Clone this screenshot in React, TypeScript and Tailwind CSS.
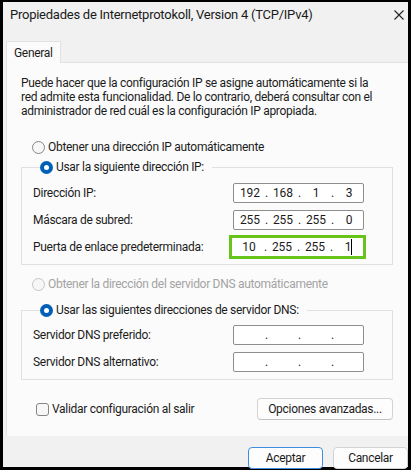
import React from "react";

const FONT = { fontFamily: 'Roboto, "Noto Sans", sans-serif' };

function Radio({ checked, disabled }: { checked?: boolean; disabled?: boolean }) {
  if (checked) {
    return (
      <span className="flex h-[13px] w-[13px] shrink-0 items-center justify-center rounded-full bg-[#005fb8]">
        <span className="h-[5px] w-[5px] rounded-full bg-white" />
      </span>
    );
  }
  return (
    <span
      className={
        "h-[13px] w-[13px] shrink-0 rounded-full border bg-[#f7f7f7] " +
        (disabled ? "border-[#c5c5c5]" : "border-[#858585]")
      }
    />
  );
}

function IpSlots({ values, cursor }: { values: string[]; cursor?: boolean }) {
  return (
    <div className="flex h-full items-center tracking-normal">
      {values.map((v, i) => (
        <React.Fragment key={i}>
          <span className="relative w-[28px] text-center leading-[16px]">
            {v}
            {cursor && i === 3 ? (
              <span className="absolute left-[17px] top-[0px] h-[16px] w-[1px] bg-black" />
            ) : null}
          </span>
          {i < 3 ? <span className="w-[5px] text-center leading-[16px]">.</span> : null}
        </React.Fragment>
      ))}
    </div>
  );
}

function IpInput({ values }: { values: string[] }) {
  return (
    <div className="h-[20px] w-[131px] rounded-[2px] border border-[#8e8e8e] bg-white pl-[2px]">
      <IpSlots values={values} />
    </div>
  );
}

function Row({ label, children }: { label: string; children: React.ReactNode }) {
  return (
    <div className="flex h-[27px] items-center">
      <span className="w-[200px]">{label}</span>
      {children}
    </div>
  );
}

export default function App() {
  return (
    <div className="bg-white" style={FONT}>
      <div className="flex h-[470px] w-[411px] flex-col border-b-[3px] border-l-[3px] border-r-[3px] border-t-[2px] border-black bg-[#f1f1f1] text-[12px] tracking-[-0.3px] text-[#1b1b1b]">
        {/* title bar */}
        <div className="flex h-[26px] shrink-0 items-center justify-between pl-[7px] pr-[3px]">
          <span className="text-[13px] tracking-[-0.25px]">Propiedades de Internetprotokoll, Version 4 (TCP/IPv4)</span>
          <svg width="10" height="10" viewBox="0 0 10 10" className="mr-[1px]">
            <path d="M0.5 0.5 L9.5 9.5 M9.5 0.5 L0.5 9.5" stroke="#222" strokeWidth="1.1" fill="none" />
          </svg>
        </div>
        {/* tab strip */}
        <div className="flex h-[34px] shrink-0 items-end pl-[3px]">
          <div className="relative z-10 -mb-[1px] flex h-[22px] items-center border border-b-0 border-[#e2e2e2] bg-[#fbfbfb] px-[7px]">
            General
          </div>
        </div>
        {/* panel */}
        <div className="ml-[3px] flex h-[374px] shrink-0 flex-col border-l border-t border-[#e2e2e2] bg-[#fbfbfb] pl-[14px] pr-[15px] pt-[13px]">
          <p className="whitespace-nowrap leading-[14px]">
            Puede hacer que la configuración IP se asigne automáticamente si la
            <br />
            red admite esta funcionalidad. De lo contrario, deberá consultar con el
            <br />
            administrador de red cuál es la configuración IP apropiada.
          </p>
          <div className="mt-[21px] flex h-[16px] items-center gap-[3px] pl-[11px]">
            <Radio />
            <span>Obtener una dirección IP automáticamente</span>
          </div>
          <fieldset className="mt-[4px] border border-[#e0e0e0] px-[11px] pb-[4px] pt-[4px]">
            <legend className="ml-[7px] flex h-[16px] items-center gap-[3px] pr-[8px]">
              <Radio checked />
              <span>Usar la siguiente dirección IP:</span>
            </legend>
            <Row label="Dirección IP:">
              <IpInput values={["192", "168", "1", "3"]} />
            </Row>
            <Row label="Máscara de subred:">
              <IpInput values={["255", "255", "255", "0"]} />
            </Row>
            <div className="flex h-[27px] items-center">
              <span className="w-[196px]">Puerta de enlace predeterminada:</span>
              <div className="h-[24px] w-[137px] border-[3px] border-[#66c41a] bg-white pl-[3px]">
                <IpSlots values={["10", "255", "255", "1"]} cursor />
              </div>
            </div>
          </fieldset>
          <div className="mt-[11px] flex h-[16px] items-center gap-[3px] pl-[11px] text-[#a3a3a3]">
            <Radio disabled />
            <span>Obtener la dirección del servidor DNS automáticamente</span>
          </div>
          <fieldset className="mt-[10px] border border-[#e0e0e0] px-[11px] pb-[4px] pt-[3px]">
            <legend className="ml-[7px] flex h-[16px] items-center gap-[3px] pr-[8px]">
              <Radio checked />
              <span>Usar las siguientes direcciones de servidor DNS:</span>
            </legend>
            <Row label="Servidor DNS preferido:">
              <IpInput values={["", "", "", ""]} />
            </Row>
            <Row label="Servidor DNS alternativo:">
              <IpInput values={["", "", "", ""]} />
            </Row>
          </fieldset>
          <div className="mt-[18px] flex h-[22px] items-center justify-between pl-[15px]">
            <div className="flex items-center gap-[3px]">
              <span className="h-[13px] w-[13px] rounded-[3px] border border-[#858585] bg-[#f7f7f7]" />
              <span>Validar configuración al salir</span>
            </div>
            <button className="h-[22px] w-[136px] rounded-[4px] border border-[#d3d3d3] border-b-[#c2c2c2] bg-[#fdfdfd]">
              Opciones avanzadas...
            </button>
          </div>
        </div>
        {/* bottom buttons */}
        <div className="mt-[11px] flex justify-end gap-[10px]">
          <button className="h-[22px] w-[75px] rounded-[4px] border border-[#3d8ee0] bg-[#fdfdfd]">Aceptar</button>
          <button className="h-[22px] w-[75px] rounded-[4px] border border-[#d3d3d3] bg-[#fdfdfd]">Cancelar</button>
        </div>
      </div>
    </div>
  );
}
